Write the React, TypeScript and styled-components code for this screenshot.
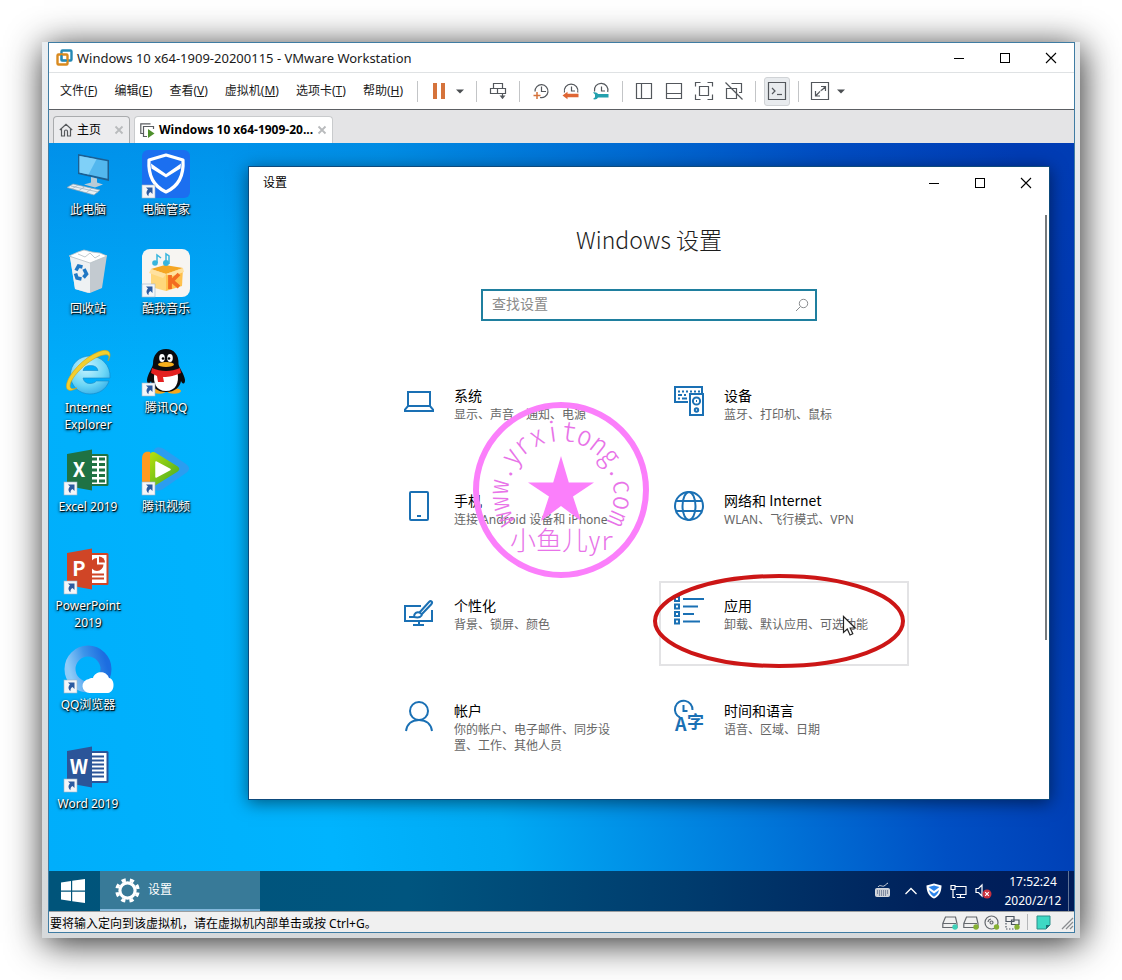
import React from "react";
import styled, { createGlobalStyle, css } from "styled-components";

const uiFont = '"Noto Sans", "Noto Sans CJK SC", sans-serif';
const cjkFont = '"Noto Sans CJK SC", sans-serif';

const GlobalStyle = createGlobalStyle`
  * { box-sizing: border-box; }
  body {
    margin: 0;
    background: #fff;
    color: #000;
    font: 12px/16px ${uiFont};
  }
  button, input { font: inherit; color: inherit; }
  button { background: none; border: 0; padding: 0; cursor: default; }
  svg { display: block; flex: none; overflow: visible; }
`;

/* ---------- outer window ---------- */

const Page = styled.div`
  padding: 42px;
`;

const Frame = styled.div`
  padding: 0 5px 5px 6px;
  background: linear-gradient(#e9edf0, #d6d9db);
  box-shadow: 2px 5px 34px rgba(0, 0, 0, 0.85);
`;

const HostWindow = styled.div`
  display: flex;
  flex-direction: column;
  border: 1px solid #3f7ca3;
  background: #fff;
`;

const TitleBar = styled.header`
  display: flex;
  align-items: center;
  height: 30px;
  padding-left: 7px;
  gap: 4px;
  border-bottom: 1px solid #dfe2e4;
`;

const HostTitle = styled.h1`
  flex: 1;
  margin: 0;
  color: #1a1a1a;
  font-size: 13px;
  line-height: 16px;
  font-weight: 400;
  white-space: nowrap;
`;

const CaptionButtons = styled.div`
  display: flex;
  margin-left: auto;
`;

const CaptionButton = styled.button`
  display: flex;
  align-items: center;
  justify-content: center;
  width: 46px;
  height: 30px;
`;

const MenuRow = styled.div`
  display: flex;
  align-items: center;
  height: 37px;
  padding-left: 11px;
  border-bottom: 1px solid #5c5f63;
`;

const Menus = styled.nav`
  display: flex;
  gap: 17px;
  width: 351px;
  color: #1a1a1a;
  white-space: nowrap;
`;

const Separator = styled.i`
  width: 1px;
  height: 21px;
  margin: 0 6px;
  background: #c3c5c7;
`;

const ToolButton = styled.button<{ $pressed?: boolean }>`
  display: flex;
  align-items: center;
  justify-content: center;
  width: 30px;
  height: 30px;
  ${(p) =>
    p.$pressed &&
    css`
      height: 29px;
      width: 26px;
      margin: 0 2px;
      border: 1px solid #d0d3d6;
      border-radius: 3px;
      background: #e8ebee;
    `}
`;

const CaretButton = styled.button`
  display: flex;
  justify-content: center;
  width: 12px;
  margin-right: 4px;
`;

const TabBar = styled.div`
  display: flex;
  align-items: flex-end;
  gap: 4px;
  height: 33px;
  padding-left: 4px;
  background: #e4e4e6;
`;

const Tab = styled.div<{ $active?: boolean }>`
  display: flex;
  align-items: center;
  justify-content: space-between;
  gap: 4px;
  min-width: 77px;
  height: 27px;
  padding: 0 5px;
  border: 1px solid ${(p) => (p.$active ? "#c9cbcd" : "#a9abad")};
  border-bottom: 0;
  border-radius: 4px 4px 0 0;
  background: ${(p) => (p.$active ? "#fff" : "#ececee")};
  font-family: "Open Sans", ${cjkFont};
  font-weight: ${(p) => (p.$active ? 700 : 400)};
  white-space: nowrap;
`;

const TabLabel = styled.button`
  display: flex;
  align-items: center;
  gap: 4px;
`;

/* ---------- guest desktop ---------- */

const Desktop = styled.main`
  display: flex;
  align-items: flex-start;
  min-height: 728px;
  background:
    linear-gradient(180deg, rgba(0, 70, 190, 0.3), rgba(0, 70, 190, 0) 35%),
    linear-gradient(80deg, #00aefb 0%, #00b4fe 25%, #00aaf4 40%, #0078da 62%, #0050c4 78%, #0038b0 95%);
`;

const IconGrid = styled.div`
  display: grid;
  grid-auto-flow: column;
  grid-template-rows: repeat(7, 99px);
  grid-auto-columns: 78px;
  width: 199px;
  padding-top: 7px;
  flex: none;
`;

const Shortcut = styled.button`
  display: flex;
  flex-direction: column;
  align-items: center;
  justify-content: flex-start;
  gap: 3px;
`;

const ShortcutLabel = styled.span`
  color: #fff;
  font-size: 12px;
  line-height: 17px;
  text-align: center;
  text-shadow: 1px 1px 1px #000, 0 1px 3px #000;
`;

const SettingsWindow = styled.section`
  position: relative;
  flex: 1;
  min-width: 0;
  margin: 23px 24px 71px 0;
  border: 1px solid #0d4a7d;
  background: #fff;
  box-shadow: 0 3px 16px rgba(0, 0, 0, 0.5);
`;

const SettingsBar = styled.header`
  display: flex;
  align-items: center;
  height: 32px;
  padding-left: 14px;
`;

const SettingsBody = styled.div`
  display: flex;
  flex-direction: column;
  align-items: center;
  padding: 24px 20px 28px;
`;

const Heading = styled.h2`
  margin: 0;
  color: #1c1c1c;
  font: 300 23px/32px ${cjkFont};
`;

const SearchBox = styled.label`
  display: flex;
  align-items: center;
  width: 336px;
  height: 32px;
  margin-top: 34px;
  padding: 0 6px 0 9px;
  border: 2px solid #1f7f9f;
`;

const SearchInput = styled.input`
  flex: 1;
  min-width: 0;
  height: 28px;
  padding: 0 0 4px;
  border: 0;
  outline: 0;
  background: none;
  font: 14px/20px ${cjkFont};
  &::placeholder { color: #8a8a8a; opacity: 1; }
`;

const Tiles = styled.div`
  position: relative;
  display: grid;
  grid-template-columns: repeat(2, 250px);
  grid-auto-rows: 85px;
  gap: 20px;
  margin-top: 50px;
`;

const Tile = styled.button<{ $hover?: boolean }>`
  position: relative;
  display: flex;
  align-items: flex-start;
  gap: 20px;
  padding: 12px 18px 0 13px;
  border: 2px solid ${(p) => (p.$hover ? "#e3e3e5" : "transparent")};
  text-align: left;
`;

const TileText = styled.span`
  display: flex;
  flex-direction: column;
  gap: 2px;
  color: #666;
  font: 12px/16px ${uiFont};
`;

const TileTitle = styled.strong`
  color: #000;
  font: 400 14px/20px ${cjkFont};
`;

const ScrollThumb = styled.i`
  position: absolute;
  top: 48px;
  right: 2px;
  width: 2px;
  height: 425px;
  background: #767a7d;
`;

const Stamp = styled.svg`
  position: absolute;
  left: 84px;
  top: 31px;
  pointer-events: none;
`;

const RedRing = styled.svg`
  position: absolute;
  left: -9px;
  top: -11px;
  pointer-events: none;
`;

const Pointer = styled.svg`
  position: absolute;
  left: 181px;
  top: 32px;
`;

/* ---------- task bar and status bar ---------- */

const TaskBar = styled.footer`
  display: flex;
  height: 40px;
  color: #fff;
  background: linear-gradient(90deg, #00547a 0%, #00557f 35%, #003c6e 62%, #00225c 85%, #001b58 100%);
`;

const StartButton = styled.button`
  display: flex;
  align-items: center;
  justify-content: center;
  width: 51px;
  padding-right: 3px;
`;

const TaskButton = styled.button`
  display: flex;
  align-items: center;
  gap: 8px;
  width: 160px;
  padding-left: 15px;
  border-bottom: 2px solid #83b9dc;
  background: #387a98;
`;

const Tray = styled.div`
  display: flex;
  align-items: center;
  gap: 8px;
  margin-left: auto;
`;

const Clock = styled.time`
  width: 66px;
  font-size: 12px;
  line-height: 19px;
  text-align: center;
`;

const ShowDesktop = styled.button`
  align-self: stretch;
  width: 6px;
  margin-left: -6px;
  border-left: 1px solid #5f7396;
`;

const StatusBar = styled.div`
  display: flex;
  align-items: center;
  height: 21px;
  padding-left: 1px;
  border-top: 1px solid #9b9ea0;
  background: #f0f0f0;
`;

const StatusText = styled.p`
  flex: 1;
  margin: 0;
  padding-top: 3px;
  white-space: nowrap;
`;

const Devices = styled.div`
  display: flex;
  align-items: center;
  gap: 5px;
`;

const DeviceDivider = styled.i`
  width: 1px;
  height: 16px;
  margin: 0 3px 0 1px;
  background: #b4b6b8;
`;

/* ---------- small glyphs ---------- */

const Min = () => (
  <svg width="12" height="12" stroke="#000"><path d="M1 6.500h10" /></svg>
);
const Max = () => (
  <svg width="12" height="12" stroke="#000" fill="none"><rect x="1.500" y="1.500" width="9" height="9" /></svg>
);
const Close = () => (
  <svg width="12" height="12" stroke="#000" strokeWidth="1.100"><path d="M1 1l10 10M11 1L1 11" /></svg>
);
const Caret = () => (
  <svg width="8" height="5" fill="#4b4e52"><path d="M0 .5h8L4 4.500z" /></svg>
);
const TabClose = () => (
  <svg width="10" height="10" stroke="#b9bbbd" strokeWidth="1.800"><path d="M1.500 1.500l7 7M8.500 1.500l-7 7" /></svg>
);

const Captions = () => (
  <CaptionButtons>
    <CaptionButton aria-label="最小化"><Min /></CaptionButton>
    <CaptionButton aria-label="最大化"><Max /></CaptionButton>
    <CaptionButton aria-label="关闭"><Close /></CaptionButton>
  </CaptionButtons>
);

const HostLogo = () => (
  <svg width="17" height="17" fill="none" strokeWidth="2.400">
    <rect x="5.500" y="1.500" width="10" height="10" rx="1" stroke="#2589b5" />
    <rect x="1.500" y="5.500" width="10" height="10" rx="1" stroke="#d98a1f" />
    <path d="M5.500 6V11.500H11" stroke="#2589b5" strokeWidth="1.600" />
  </svg>
);

const ToolSvg = ({ children }: { children: React.ReactNode }) => (
  <svg width="20" height="20" fill="none" stroke="#53575c" strokeWidth="1.200">{children}</svg>
);

const PauseIcon = () => (
  <svg width="14" height="16" fill="#d5733b"><path d="M1 0h4v16H1zM9 0h4v16H9z" /></svg>
);
const SendKeysIcon = () => (
  <ToolSvg>
    <path d="M5.500 7.500v-5h9v5M2.500 7.500h15v5h-15zM9.500 7.500v5M14.500 12.500v5" />
    <path d="M11.500 14.500h6l-3 3.500z" fill="#53575c" stroke="none" />
  </ToolSvg>
);
const SnapshotIcon = () => (
  <ToolSvg>
    <path d="M4 10.500a6.500 6.500 0 1 1 5 6M10.500 5.500v5h4.500" />
    <path d="M6 11v7M2.500 14.500h7" stroke="#d5733b" strokeWidth="1.500" />
  </ToolSvg>
);
const RevertIcon = () => (
  <ToolSvg>
    <path d="M3.500 11.500a6.800 6.800 0 1 1 13.200 0M10.500 5.500v4.500h3.500" />
    <path d="M1.500 14.500l5-3.800v2h11v3.600h-11v2z" fill="#df6634" stroke="none" />
  </ToolSvg>
);
const ManageIcon = () => (
  <ToolSvg>
    <path d="M3.500 10.500a6.800 6.800 0 1 1 13.200 .5M10.500 5.500v4.500h3.500" />
    <path d="M2 11.500c2-.8 4.300 0 5 1.600h10.500v3.400H7c-.7 1.700-3 2.400-5 1.600l2-1.900v-2.800z" fill="#23a0ad" stroke="none" />
  </ToolSvg>
);
const SidePanelIcon = () => (
  <ToolSvg><path d="M2.500 2.500h15v15h-15zM7.500 2.500v15" /></ToolSvg>
);
const ThumbBarIcon = () => (
  <ToolSvg><path d="M2.500 2.500h15v15h-15zM2.500 12.500h15" /></ToolSvg>
);
const FullScreenIcon = () => (
  <ToolSvg><path d="M5.500 5.500h9v9h-9zM1.500 5.500v-4h5M13.500 1.500h5v4M18.500 13.500v5h-5M6.500 18.500h-5v-5" /></ToolSvg>
);
const UnityIcon = () => (
  <ToolSvg><path d="M7.500 2.500h10v9h-2.500M2.500 7.500h10v10h-10zM1.500 1.500l17 17" /></ToolSvg>
);
const ConsoleIcon = () => (
  <ToolSvg><path d="M1.500 1.500h17v17h-17zM5 7l3 3-3 3" /><path d="M10 13.500h5" /></ToolSvg>
);
const StretchIcon = () => (
  <ToolSvg>
    <path d="M1.500 1.500h17v17h-17zM11 5.500h4.500V10M15 6l-3 3M5.500 10v5h4.500M6 14.500l3-3" />
    <path d="M9 11.500l3-3" strokeDasharray="1.500 1" />
  </ToolSvg>
);

const HomeIcon = () => (
  <svg width="14" height="14" fill="none" stroke="#55585b" strokeWidth="1.200">
    <path d="M.8 7L7 1.200 13.200 7M2.500 6v7h3V8.500a1.500 1.500 0 0 1 3 0V13h3V6" />
  </svg>
);
const MachineIcon = () => (
  <svg width="15" height="15" fill="none" stroke="#595c60" strokeWidth="1.200">
    <path d="M3 10.500H.8V.8h9.700M13.500 6V3.500h-10v10H7" />
    <path d="M8 6l6.500 4.500L8 15z" fill="#4e8f2c" stroke="none" />
  </svg>
);

/* ---------- desktop pictures, drawn on a 48 x 48 field ---------- */

const Pic = ({ children, arrow }: { children: React.ReactNode; arrow?: boolean }) => (
  <svg width="48" height="48" viewBox="0 0 48 48">
    {children}
    {arrow && (
      <g>
        <rect x="0" y="35" width="13" height="13" fill="#f4f6f8" stroke="#9fb4c8" strokeWidth=".6" />
        <path d="M4 37.500h6.500V44L8.500 42c-1.700 1-2.200 2.300-2 4.200C4.200 44.500 3.800 41.800 6 39.600z" fill="#2c5aa0" />
      </g>
    )}
  </svg>
);

const ThisPc = () => (
  <Pic>
    <path d="M14 4l31 6v21L14 24z" fill="#1c5f92" />
    <path d="M15.500 6L43.500 11.300v17.500L15.500 22.500z" fill="#53b7ee" />
    <path d="M15.500 6l17 3.200-8 15.400-9-2z" fill="#7fd0f8" />
    <path d="M27 27l6 1.500v4l6 2-8 3-11-3 7-2z" fill="#b9cbd6" />
    <path d="M9 34l27 6-6 5L3 37.500z" fill="#e9eff3" stroke="#8ba3b3" strokeWidth=".7" />
    <path d="M7 36l27 6M14 35l-6 4M21 36.500l-6 4M28 38l-6 5" stroke="#a4b6c2" strokeWidth=".8" />
  </Pic>
);
const RecycleBin = () => (
  <Pic>
    <path d="M6 8l36-2-5 33-13 5-13-4z" fill="#d5dadd" />
    <path d="M6 8l20 5v31l-15-4z" fill="#eef1f3" />
    <path d="M26 13l17-7-5 33-12 5z" fill="#c3cad0" />
    <path d="M5 7l9-4 6-2 8 2 8 1 7 3-17 7z" fill="#fff" stroke="#b8c1c6" strokeWidth=".8" />
    <path d="M14 5l7 3 5-4 5 5 5-3" stroke="#c1cace" fill="none" />
    <g fill="none" stroke="#2178c4" strokeWidth="3.600">
      <path d="M12 21.500l2.500-4.500 4 1" /><path d="M20 20l2.500 5-3 3.500" /><path d="M17.500 30l-4.500-1-1.500-4.500" />
    </g>
  </Pic>
);
const Explorer = () => (
  <Pic>
    <defs>
      <radialGradient id="ie" cx=".4" cy=".3" r=".8">
        <stop offset="0" stopColor="#c6f3ff" /><stop offset=".6" stopColor="#6cd6f6" /><stop offset="1" stopColor="#2ba8e6" />
      </radialGradient>
    </defs>
    <path d="M46 30H19c.7 3.500 3 5.500 7 5.500 3 0 5-1 6.300-2.500H45C42.500 41 35 46 26 46 15 46 6.500 38 6.500 27S15 8 26 8s21 9 20 22zM19 22.500h15c-.8-3.500-3.300-5-7.500-5s-6.700 1.500-7.500 5z" fill="url(#ie)" stroke="#1887c4" strokeWidth=".6" />
    <path d="M44 13c2-5 1-7-4-6C30 8 12 23 7 34c-2.500 6 0 8 6 6-8 5-13 2-9.500-7C9 20 26 5 39 2.500c7-1 9 4 5 10.500z" fill="#f3cf2e" stroke="#cfa01a" strokeWidth=".6" />
  </Pic>
);

type OfficeProps = { letter: string; dark: string; children: React.ReactNode };
const Office = ({ letter, dark, children }: OfficeProps) => (
  <Pic arrow>
    <rect x="27" y="7" width="17.500" height="32" rx="1.500" fill={dark} />
    <rect x="26" y="9" width="16.500" height="28" fill="#fff" />
    {children}
    <path d="M3 7l25-4.500v41L3 39z" fill={dark} />
    <text x="15" y="30" fill="#fff" fontSize="20" fontWeight="700" textAnchor="middle" fontFamily="Noto Sans CJK SC, sans-serif">
      {letter}
    </text>
  </Pic>
);
const Excel = () => (
  <Office letter="X" dark="#1f7244">
    <path d="M28 12h5M35 12h6M28 17.500h5M35 17.500h6M28 23h5M35 23h6M28 28.500h5M35 28.500h6M28 34h5M35 34h6" stroke="#1f7244" strokeWidth="2.800" />
  </Office>
);
const PowerPoint = () => (
  <Office letter="P" dark="#d04526">
    <path d="M33 12a6.500 6.500 0 1 0 6.500 6.500H33z" fill="#d04526" />
    <path d="M35 10.500a6 6 0 0 1 6 6h-6z" fill="#d04526" />
    <path d="M28 28.500h12M28 32.500h12" stroke="#d04526" strokeWidth="2" />
  </Office>
);
const Word = () => (
  <Office letter="W" dark="#2b5599">
    <path d="M28 12.500h12M28 16.500h12M28 20.500h12M28 24.500h12M28 28.500h12M28 32.500h12" stroke="#2b5599" strokeWidth="1.800" />
  </Office>
);
const QqBrowser = () => (
  <Pic arrow>
    <defs>
      <linearGradient id="qb" x1="0" y1="0.600" x2="1" y2=".3">
        <stop offset="0" stopColor="#8fcbf8" /><stop offset=".5" stopColor="#3d95ea" /><stop offset="1" stopColor="#1c6de0" />
      </linearGradient>
    </defs>
    <circle cx="24" cy="24" r="18" fill="none" stroke="url(#qb)" strokeWidth="11" />
    <path d="M26 48a7 7 0 0 1-1-14c1-1 3-1.300 4-1 2-7 13-8 16 0 6 .5 6.500 14-1 15z" fill="#fff" />
  </Pic>
);
const PcManager = () => (
  <Pic arrow>
    <rect width="48" height="48" rx="6" fill="#1b6ff0" />
    <path d="M24 5l17 5c1 15-4 26-17 32C11 36 6 25 7 10z" fill="none" stroke="#fff" strokeWidth="3.200" strokeLinejoin="round" />
    <path d="M9 13.500L24 24l15-10.500-.5 5L24 27.500 9.500 18.500z" fill="#fff" />
  </Pic>
);
const Kuwo = () => (
  <Pic arrow>
    <rect width="48" height="48" rx="8" fill="#f7f5f2" />
    <path d="M9 20l15 5v17L9 38z" fill="#ffd77a" />
    <path d="M24 25l17-6-1 18-16 5z" fill="#ffc14d" />
    <path d="M9 20l14-4 18 3-17 6z" fill="#f5a623" />
    <path d="M9 20l15 5-3 4-14-5zM41 19l-17 6 4 3 14-5z" fill="#ffe2a0" />
    <path d="M28 26v14M37 25l-7 7 7 6" stroke="#f36c21" strokeWidth="3.800" fill="none" />
    <path d="M15 14V6l4 3M24 13V5l3 2v8" stroke="#39b5dd" strokeWidth="1.500" fill="none" />
    <circle cx="13" cy="14" r="2.800" fill="#39b5dd" /><circle cx="24" cy="14" r="3" fill="#39b5dd" />
  </Pic>
);
const Qq = () => (
  <Pic arrow>
    <ellipse cx="17" cy="43" rx="7" ry="2.800" fill="#f7a81b" /><ellipse cx="32" cy="43" rx="7" ry="2.800" fill="#f7a81b" />
    <path d="M24 1c8 0 13 6 12.500 15 0 3 6 10 6.500 16 .2 4-2 5-4 1-1 6-6 11-15 11S10 39 9 33c-2 4-4 3-4-1 .5-6 6-13 6-16C11 7 16 1 24 1z" fill="#0b0b0d" />
    <path d="M12.500 25c6 4 17 4 23 0 2 10-2 18-11.500 18S10.500 35 12.500 25z" fill="#fff" />
    <ellipse cx="20" cy="10" rx="2.800" ry="3.900" fill="#fff" /><ellipse cx="28" cy="10" rx="2.800" ry="3.900" fill="#fff" />
    <circle cx="21" cy="10.500" r="1.300" /><circle cx="27" cy="10.500" r="1.300" />
    <ellipse cx="24" cy="16.500" rx="8" ry="2.500" fill="#f7b01b" />
    <path d="M10 20c9 4 19 4 28 0l1 5c-9 4-15 4-18 4l1 5h-6l-1-6-6-3z" fill="#e32020" />
  </Pic>
);
const TencentVideo = () => (
  <Pic arrow>
    <defs>
      <linearGradient id="tv" x1="0" y1="0" x2="1" y2="1">
        <stop offset="0" stopColor="#b7e00c" /><stop offset="1" stopColor="#3fa825" />
      </linearGradient>
    </defs>
    <path d="M12 3c2-4 6-3 10-1l22 15c4 3 4 6 0 9L21 42c-5 3-9 2-9-3z" fill="#2b9df0" />
    <path d="M0 12c0-6 3-8 8-7l8 18-8 17c-5 1-8-1-8-7z" fill="#ff9a1f" />
    <path d="M8 9c0-4 3-5 6-3l21 13c3 2 3 4 0 6L14 38c-4 3-6 1-6-2z" fill="url(#tv)" />
    <path d="M14 15l14 7.500L14 30z" fill="#fff" stroke="#fff" strokeWidth="1.500" strokeLinejoin="round" />
  </Pic>
);

const shortcuts: [string, React.FC][] = [
  ["此电脑", ThisPc],
  ["回收站", RecycleBin],
  ["Internet Explorer", Explorer],
  ["Excel 2019", Excel],
  ["PowerPoint 2019", PowerPoint],
  ["QQ浏览器", QqBrowser],
  ["Word 2019", Word],
  ["电脑管家", PcManager],
  ["酷我音乐", Kuwo],
  ["腾讯QQ", Qq],
  ["腾讯视频", TencentVideo],
];

/* ---------- settings category icons ---------- */

const Line = ({ children }: { children: React.ReactNode }) => (
  <svg width="30" height="31" fill="none" stroke="#1a70b4" strokeWidth="2">{children}</svg>
);
const SystemIcon = () => (
  <Line><path d="M4 21V7h22v14M4 21h22l3 3.500V26H1v-1.500z" /></Line>
);
const DevicesIcon = () => (
  <Line>
    <path d="M14 17H1V2h27v6" />
    <path d="M4 6.500h2M8 6.500h2M12 6.500h2M16 6.500h2M20 6.500h2M24 6.500h2M4 10h4M10 10h2M4 13.500h2M8 13.500h5" />
    <path d="M16 9h13v21H16z" /><circle cx="22.500" cy="16" r="3.600" /><circle cx="22.500" cy="25" r="1.700" /><path d="M22 16h1" />
  </Line>
);
const PhoneIcon = () => (
  <Line><rect x="6" y="2" width="18" height="28" rx="1" /><path d="M13 26h4" /></Line>
);
const GlobeIcon = () => (
  <Line><circle cx="15" cy="16" r="14" /><ellipse cx="15" cy="16" rx="6.500" ry="14" /><path d="M2 11h26M2 21h26" /></Line>
);
const PersonalizeIcon = () => (
  <Line>
    <path d="M17 11H1v15h27V15M15 26v4M9 30h11" />
    <path d="M5 22h5c0-4 3-5.500 5.500-4.500L25 7c2-2 4 0 2.500 2L18 19c0 3-3 4-8 3M15.500 17.500l2.500 2" />
  </Line>
);
const AppsIcon = () => (
  <Line>
    <path d="M1 2h4v4H1zM1 9.500h4v4H1zM1 17h4v4H1zM1 24.500h4v4H1zM9 4h21M9 11.500h15M9 19h11M9 26.500h17" />
  </Line>
);
const AccountIcon = () => (
  <Line><circle cx="15" cy="11" r="9" /><path d="M2 31c1-7 6-11 13-11s12 4 13 11" /></Line>
);
const TimeIcon = () => (
  <Line>
    <path d="M6 17.500A8.800 8.800 0 1 1 18.500 10M9.500 5v6h4" />
    <g fill="#1a70b4" stroke="none" fontFamily="Noto Sans CJK SC, sans-serif" fontWeight="700">
      <text x="1" y="31" fontSize="18">A</text>
      <text x="13" y="28" fontSize="17">字</text>
    </g>
  </Line>
);

const categories: [string, string, React.FC][] = [
  ["系统", "显示、声音、通知、电源", SystemIcon],
  ["设备", "蓝牙、打印机、鼠标", DevicesIcon],
  ["手机", "连接 Android 设备和 iPhone", PhoneIcon],
  ["网络和 Internet", "WLAN、飞行模式、VPN", GlobeIcon],
  ["个性化", "背景、锁屏、颜色", PersonalizeIcon],
  ["应用", "卸载、默认应用、可选功能", AppsIcon],
  ["帐户", "你的帐户、电子邮件、同步设置、工作、其他人员", AccountIcon],
  ["时间和语言", "语音、区域、日期", TimeIcon],
];

const StampText = styled.text`
  fill: #e873e8;
  font-family: ${cjkFont};
  font-weight: 300;
  font-feature-settings: "hwid";
  text-anchor: middle;
`;

const Seal = () => (
  <Stamp width="176" height="176" fill="#fb7ffb">
    <defs><path id="arc" d="M43 120A53 53 0 1 1 133 120" /></defs>
    <circle cx="88" cy="88" r="85" fill="none" stroke="#fb7ffb" strokeWidth="6" />
    <path d="M88 54l7.800 26.400H121L100 94.500l8 24.500-20-15-20 15 8-24.500-21-14.100h25.200z" />
    <StampText fontSize="28">
      <textPath href="#arc" startOffset="50%">www.yrxitong.com</textPath>
    </StampText>
    <StampText x="89" y="148" fontSize="26">小鱼儿yr</StampText>
  </Stamp>
);

/* ---------- tray and device icons ---------- */

const KeyboardIcon = () => (
  <svg width="21" height="16" fill="none" stroke="#d5d9df">
    <rect x=".5" y="5.500" width="14" height="8" rx="1" fill="#c9ced6" />
    <path d="M2 8h11M2 10h11M4 12h7" stroke="#35496c" strokeDasharray="1 1" />
    <path d="M3 4c2-3 4 0 6-1s2-2 4-3" />
  </svg>
);
const ChevronIcon = () => (
  <svg width="14" height="8" fill="none" stroke="#fff" strokeWidth="1.300"><path d="M1.500 7L7 1.500 12.500 7" /></svg>
);
const ShieldIcon = () => (
  <svg width="16" height="16"><path d="M8 .5l7.500 2C15.500 9 13 13.500 8 15.500 3 13.500.5 9 .5 2.500z" fill="#fff" /><path d="M2.500 4L8 2.500 13.500 4 8 8zM3 7l5 3.500L13 7c-.7 3-2.500 5.500-5 6.800C5.500 12.500 3.700 10 3 7z" fill="#2a83ea" /></svg>
);
const NetworkIcon = () => (
  <svg width="17" height="15" fill="none" stroke="#fff" strokeWidth="1.200"><path d="M5 2.500h11v8H6M10.500 10.500v3M7 13.500h8M1 1.500h4v4H1zM3 5.500v8h2" /></svg>
);
const MuteIcon = () => (
  <svg width="17" height="16" fill="none" stroke="#fff" strokeWidth="1.200">
    <path d="M1 5.500h2.500L7 2v11L3.500 9.500H1z" /><circle cx="12" cy="11" r="4.500" fill="#c9313f" stroke="none" /><path d="M10.200 9.200l3.600 3.600M13.800 9.200l-3.600 3.600" />
  </svg>
);
const DriveIcon = ({ dot }: { dot: string }) => (
  <svg width="16" height="15" fill="none" stroke="#64686d" strokeWidth="1.200"><path d="M.8 8.500L3.500 2h10l1.500 6.500v4H.8zM1 8.500h13" /><circle cx="13" cy="12" r="2.700" fill={dot} stroke="none" /></svg>
);
const DiscIcon = () => (
  <svg width="16" height="15" fill="none" stroke="#64686d" strokeWidth="1.200"><circle cx="7.500" cy="7.500" r="6.500" /><circle cx="7.500" cy="7.500" r="1.500" /><path d="M4 7a3.500 3.500 0 0 1 3-3" /><circle cx="12.500" cy="12" r="2.700" fill="#86b134" stroke="none" /></svg>
);
const AdapterIcon = () => (
  <svg width="16" height="15" fill="none" stroke="#4c5560" strokeWidth="1.200"><path d="M1 1.500h8v5H1zM6.500 5h7.500v4.500H6.500z" fill="#f0f0f0" /><path d="M1 8v6h10" strokeDasharray="1.500 1.500" /><circle cx="12" cy="12" r="2.700" fill="#86b134" stroke="none" /></svg>
);
const NoteIcon = () => (
  <svg width="15" height="15"><path d="M1 1h13v9l-4 4H1z" fill="#3dd9c4" stroke="#2a8f8a" /><path d="M14 10h-4v4z" fill="#1d6f75" /></svg>
);
const Grip = () => (
  <svg width="18" height="16" stroke="#8a8d90" strokeWidth="1.300"><path d="M6 15L17 4M10 15l7-7M14 15l3-3" /></svg>
);
const Gear = () => (
  <svg width="25" height="25" viewBox="0 0 24 24" fill="none" stroke="#fff">
    <circle cx="12" cy="12" r="7.300" strokeWidth="3" />
    <circle cx="12" cy="12" r="10.200" strokeWidth="3.200" strokeDasharray="4 4.011" strokeDashoffset="-2" />
  </svg>
);
const WindowsLogo = () => (
  <svg width="24" height="24" fill="#fff"><path d="M0 3.500L10 2v9.500H0zM11.200 1.800L24 0v11.500H11.200zM0 12.700h10V22L0 20.500zM11.200 12.700H24V24l-12.800-1.800z" /></svg>
);

const menus: [string, string][] = [
  ["文件", "F"], ["编辑", "E"], ["查看", "V"], ["虚拟机", "M"], ["选项卡", "T"], ["帮助", "H"],
];

export default function App() {
  return (
    <>
      <GlobalStyle />
      <Page>
        <Frame>
          <HostWindow>
            <TitleBar>
              <HostLogo />
              <HostTitle>Windows 10 x64-1909-20200115 - VMware Workstation</HostTitle>
              <Captions />
            </TitleBar>
            <MenuRow>
              <Menus>
                {menus.map(([name, key]) => (
                  <button key={key}>{name}(<u>{key}</u>)</button>
                ))}
              </Menus>
              <Separator />
              <ToolButton aria-label="挂起"><PauseIcon /></ToolButton>
              <CaretButton aria-label="电源选项"><Caret /></CaretButton>
              <Separator />
              <ToolButton aria-label="发送按键"><SendKeysIcon /></ToolButton>
              <Separator />
              <ToolButton aria-label="拍摄快照"><SnapshotIcon /></ToolButton>
              <ToolButton aria-label="恢复快照"><RevertIcon /></ToolButton>
              <ToolButton aria-label="管理快照"><ManageIcon /></ToolButton>
              <Separator />
              <ToolButton aria-label="显示库"><SidePanelIcon /></ToolButton>
              <ToolButton aria-label="缩略图栏"><ThumbBarIcon /></ToolButton>
              <ToolButton aria-label="全屏"><FullScreenIcon /></ToolButton>
              <ToolButton aria-label="Unity"><UnityIcon /></ToolButton>
              <Separator />
              <ToolButton aria-label="控制台" $pressed><ConsoleIcon /></ToolButton>
              <Separator />
              <ToolButton aria-label="拉伸"><StretchIcon /></ToolButton>
              <CaretButton aria-label="拉伸选项"><Caret /></CaretButton>
            </MenuRow>
            <TabBar>
              <Tab>
                <TabLabel><HomeIcon />主页</TabLabel>
                <button aria-label="关闭主页"><TabClose /></button>
              </Tab>
              <Tab $active>
                <TabLabel><MachineIcon />Windows 10 x64-1909-20...</TabLabel>
                <button aria-label="关闭标签"><TabClose /></button>
              </Tab>
            </TabBar>

            <Desktop>
              <IconGrid>
                {shortcuts.map(([name, Icon]) => (
                  <Shortcut key={name}>
                    <Icon />
                    <ShortcutLabel>{name}</ShortcutLabel>
                  </Shortcut>
                ))}
              </IconGrid>
              <SettingsWindow>
                <SettingsBar>
                  设置
                  <Captions />
                </SettingsBar>
                <SettingsBody>
                  <Heading>Windows 设置</Heading>
                  <SearchBox>
                    <SearchInput type="text" placeholder="查找设置" aria-label="查找设置" />
                    <svg width="14" height="14" fill="none" stroke="#8a8d90">
                      <circle cx="8.500" cy="5.500" r="4.200" /><path d="M5.500 8.500L1 13" />
                    </svg>
                  </SearchBox>
                  <Tiles>
                    {categories.map(([title, detail, Icon]) => {
                      const hovered = title === "应用";
                      return (
                        <Tile key={title} $hover={hovered}>
                          <Icon />
                          <TileText>
                            <TileTitle>{title}</TileTitle>
                            {detail}
                          </TileText>
                          {hovered && (
                            <>
                              <RedRing width="254" height="98">
                                <ellipse cx="127" cy="49" rx="124" ry="45" fill="none" stroke="#cc1616" strokeWidth="4" />
                              </RedRing>
                              <Pointer width="16" height="22">
                                <path d="M1.500 1.500v16l3.800-3.500 2.700 6 2.800-1.300L8.200 13h5z" fill="#fff" stroke="#222" strokeWidth="1.200" />
                              </Pointer>
                            </>
                          )}
                        </Tile>
                      );
                    })}
                    <Seal />
                  </Tiles>
                </SettingsBody>
                <ScrollThumb />
              </SettingsWindow>
            </Desktop>

            <TaskBar>
              <StartButton aria-label="开始"><WindowsLogo /></StartButton>
              <TaskButton><Gear />设置</TaskButton>
              <Tray>
                <KeyboardIcon />
                <ChevronIcon />
                <ShieldIcon />
                <NetworkIcon />
                <MuteIcon />
                <Clock>17:52:24<br />2020/2/12</Clock>
                <ShowDesktop aria-label="显示桌面" />
              </Tray>
            </TaskBar>
            <StatusBar>
              <StatusText>要将输入定向到该虚拟机，请在虚拟机内部单击或按 Ctrl+G。</StatusText>
              <Devices>
                <DriveIcon dot="#3dd0b8" />
                <DriveIcon dot="#86b134" />
                <DiscIcon />
                <AdapterIcon />
                <DeviceDivider />
                <NoteIcon />
                <Grip />
              </Devices>
            </StatusBar>
          </HostWindow>
        </Frame>
      </Page>
    </>
  );
}
